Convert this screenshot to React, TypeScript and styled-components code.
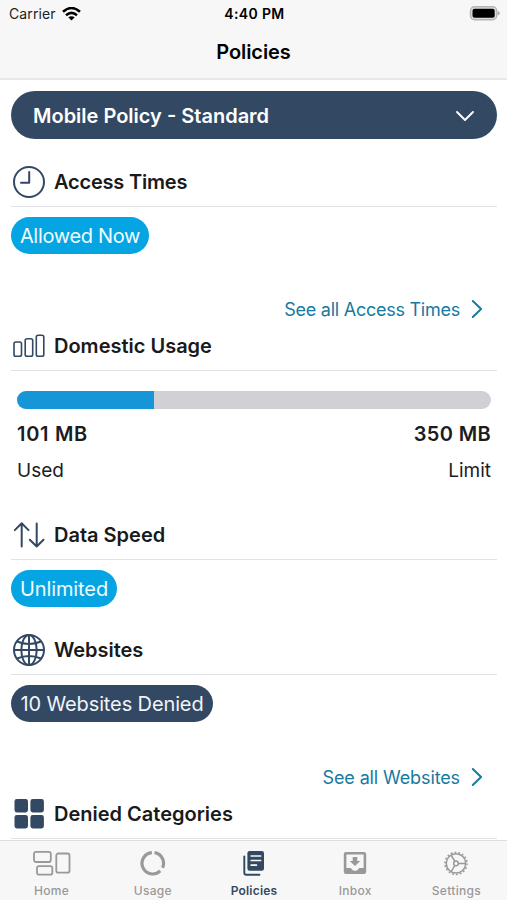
import React from "react";
import styled, { createGlobalStyle } from "styled-components";

const navy = "#334963";
const grey = "#999";

const Global = createGlobalStyle`
  * { box-sizing: border-box; }
  body { margin: 0; background: #fff; }
`;
const Screen = styled.div`
  width: 507px;
  height: 900px;
  display: flex;
  flex-direction: column;
  overflow: hidden;
  font-family: Inter, "Liberation Sans", sans-serif;
  color: #1c1c1e;
  background: #fff;
`;
const Label = styled.span<{ $size: number; $weight?: number; $track?: number }>`
  font-size: ${(p) => p.$size}px;
  font-weight: ${(p) => p.$weight ?? 400};
  letter-spacing: ${(p) => p.$track ?? 0}px;
  line-height: 24px;
  white-space: nowrap;
`;
const Header = styled.header`
  height: 80px;
  flex: none;
  background: #f7f7f7;
  border-bottom: 2px solid #e8e8e8;
  color: #000;
`;
const StatusBar = styled.div`
  height: 28px;
  padding: 0 7px 0 9px;
  display: grid;
  grid-template-columns: 1fr auto 1fr;
  align-items: center;
`;
const Carrier = styled.div`
  display: flex;
  align-items: center;
  gap: 6px;
  color: #222;
`;
const Battery = styled.svg`
  justify-self: end;
  display: block;
`;
const Title = styled.div`
  height: 48px;
  display: flex;
  justify-content: center;
  align-items: center;
`;
const Content = styled.main`
  flex: 1;
  min-height: 0;
  padding: 11px 10px 0 11px;
  overflow: hidden;
`;
const Picker = styled.div`
  height: 48px;
  border-radius: 24px;
  background: ${navy};
  color: #fff;
  padding: 2px 22px 0;
  display: flex;
  align-items: center;
  justify-content: space-between;
`;
const Section = styled.section<{ $height: number; $top?: number }>`
  height: ${(p) => p.$height}px;
  margin-top: ${(p) => p.$top ?? 0}px;
`;
const Heading = styled.div`
  height: 50px;
  border-bottom: 1px solid #e0e3e5;
  padding-left: 2px;
  display: flex;
  align-items: center;
  gap: 9px;
  color: #1a1a1a;
  svg { color: ${navy}; flex: none; }
  span { padding-top: 1px; }
`;
const Chip = styled.div<{ $width: number; $dark?: boolean }>`
  width: ${(p) => p.$width}px;
  height: 37px;
  margin-top: 10px;
  padding-top: 1px;
  border-radius: 19px;
  background: ${(p) => (p.$dark ? navy : "#05a5e3")};
  color: ${(p) => (p.$dark ? "#f0f4f8" : "#f2fbff")};
  display: flex;
  align-items: center;
  justify-content: center;
`;
const More = styled.div`
  height: 24px;
  margin-top: 43px;
  padding-right: 14px;
  display: flex;
  justify-content: flex-end;
  align-items: center;
  gap: 11px;
  color: #177a9f;
  span { padding-top: 1px; }
`;
const Track = styled.div`
  height: 18px;
  margin: 20px 6px 0;
  border-radius: 9px;
  background: #d0d0d5;
  overflow: hidden;
`;
const Fill = styled.div`
  height: 100%;
  background: #1796d7;
`;
const Ends = styled.div<{ $top: number }>`
  margin: ${(p) => p.$top}px 6px 0;
  display: flex;
  justify-content: space-between;
`;
const TabBar = styled.nav`
  height: 60px;
  flex: none;
  background: #f7f7f7;
  border-top: 1px solid #dedede;
  padding-left: 1px;
  display: grid;
  grid-template-columns: repeat(5, 1fr);
`;
const Tab = styled.div<{ $active?: boolean }>`
  display: flex;
  flex-direction: column;
  align-items: center;
  padding-top: 6px;
  color: ${(p) => (p.$active ? navy : grey)};
  svg { height: 32px; }
  span { line-height: 20px; padding-top: 2px; }
`;

const Clock = () => (
  <svg width="32" height="32" viewBox="0 0 32 32" fill="none" stroke="currentColor" strokeWidth="2">
    <circle cx="16" cy="16" r="15" />
    <path d="M16.2 6v10.700H8" strokeLinecap="round" strokeLinejoin="round" />
  </svg>
);
const Bars = () => (
  <svg width="32" height="32" viewBox="0 0 32 32" fill="none" stroke="currentColor" strokeWidth="1.6">
    <rect x="1" y="12" width="7.5" height="14.3" rx="1.8" />
    <rect x="12.2" y="8.7" width="7.5" height="17.6" rx="1.8" />
    <rect x="23.3" y="5.2" width="7.5" height="21.1" rx="1.8" />
  </svg>
);
const Arrows = () => (
  <svg width="32" height="32" viewBox="0 0 32 32" fill="none" stroke="currentColor" strokeWidth="2" strokeLinecap="round" strokeLinejoin="round">
    <path d="M8.7 27.500V4.500M1.8 11.100 8.7 4.300l6.8 6.800M23.7 4.5v23M16.8 20.7l6.9 6.8 6.8-6.8" />
  </svg>
);
const Globe = () => (
  <svg width="32" height="32" viewBox="0 0 32 32" fill="none" stroke="currentColor" strokeWidth="2">
    <circle cx="16" cy="16" r="15" />
    <ellipse cx="16" cy="16" rx="7.7" ry="15" />
    <path d="M16 1v30M1 16h30M4 7.5Q16 12.500 28 7.5M4 24.5Q16 19.500 28 24.5" />
  </svg>
);
const Grid = () => (
  <svg width="32" height="32" viewBox="0 0 32 32" fill="currentColor">
    <rect x="1.5" y="1" width="13.5" height="13.5" rx="2.4" />
    <rect x="17.4" y="1" width="13.5" height="13.5" rx="2.4" />
    <rect x="1.5" y="17" width="13.5" height="13.5" rx="2.4" />
    <rect x="17.4" y="17" width="13.5" height="13.5" rx="2.4" />
  </svg>
);
const Chevron = () => (
  <svg width="12" height="20" viewBox="0 0 12 20" fill="none" stroke="currentColor" strokeWidth="2" strokeLinecap="round" strokeLinejoin="round">
    <path d="m1.800 2 8.300 8-8.300 8" />
  </svg>
);
const HomeIcon = () => (
  <svg width="38" height="32" viewBox="0 0 38 32" fill="none" stroke="currentColor" strokeWidth="1.8">
    <rect x="1" y="4.800" width="16.8" height="10.2" rx="2" />
    <rect x="4" y="19.100" width="15.3" height="8.6" rx="2" />
    <rect x="23.3" y="6.500" width="13.2" height="19.2" rx="2" />
  </svg>
);
const UsageIcon = () => (
  <svg width="26" height="32" viewBox="0 0 26 32" fill="none" stroke="currentColor" strokeWidth="3.200">
    <path d="M14.500 5.600A10.700 10.700 0 0 1 22.500 20.800M20.200 23.900A10.700 10.700 0 1 1 11.900 5.600" />
  </svg>
);
const PoliciesIcon = () => (
  <svg width="24" height="32" viewBox="0 0 24 32">
    <path fill="none" stroke="currentColor" strokeWidth="1.900" strokeLinecap="round" d="M2.300 9.500v16.200q0 2 2 2H17.500" />
    <rect x="5.400" y="4" width="16.600" height="19.800" rx="2.200" fill="currentColor" />
    <path stroke="#f7f7f7" strokeWidth="1.700" d="M8.500 9h10.800M8.500 13.500h10.800M8.500 18.200h6.600" />
  </svg>
);
const InboxIcon = () => (
  <svg width="24" height="32" viewBox="0 0 24 32">
    <path fill="currentColor" fillRule="evenodd" d="M3 5.100h18q2.200 0 2.200 2.200v17.500q0 2.200-2.200 2.200H3q-2.200 0-2.200-2.200V7.300Q.8 5.100 3 5.100ZM3.400 7.500v13.500h4.300q1.700 3 4.300 3t4.300-3h4.300V7.500Z" />
    <path fill="currentColor" d="M9.700 10h4.600v4h3L12 19l-5.300-5h3Z" />
  </svg>
);
const Gear = () => (
  <svg width="26" height="32" viewBox="0 0 26 32" fill="none" stroke="currentColor" strokeWidth="1.500">
    <circle cx="13" cy="16.400" r="9.700" />
    <circle cx="13" cy="16.400" r="11" strokeWidth="1.500" strokeDasharray="1.900 1.940" />
    <circle cx="13" cy="16.400" r="2.300" />
    <path d="M15.300 16.400h7.400M11.900 14.400 8 8M11.900 18.400 8 24.800" />
  </svg>
);

const tabs = [
  { name: "Home", icon: <HomeIcon /> },
  { name: "Usage", icon: <UsageIcon /> },
  { name: "Policies", icon: <PoliciesIcon />, active: true },
  { name: "Inbox", icon: <InboxIcon /> },
  { name: "Settings", icon: <Gear /> },
];

const SectionTitle = ({ icon, children, track = 0 }: { icon: React.ReactNode; children: string; track?: number }) => (
  <Heading>
    {icon}
    <Label $size={20} $weight={600} $track={track}>{children}</Label>
  </Heading>
);

export default function App() {
  const used = 101;
  const limit = 350;
  return (
    <Screen>
      <Global />
      <Header>
        <StatusBar>
          <Carrier>
            <Label $size={14} $track={0.1}>Carrier</Label>
            <svg width="19" height="15" viewBox="0 0 19 15" fill="none" stroke="#000" strokeWidth="2.500">
              <path d="M1 4.800Q9.500-2.800 18 4.800M4 8.200q5.500-4.700 11 0" />
              <path d="M6.300 10.300q3.200-2.300 6.400 0L9.500 13.500Z" fill="#000" stroke="none" />
            </svg>
          </Carrier>
          <Label $size={14} $weight={600} $track={0.35}>4:40 PM</Label>
          <Battery width="31" height="16" viewBox="0 0 31 16">
            <rect x="1.500" y=".8" width="26.200" height="13" rx="4" fill="#ddd" stroke="#b5b5b5" strokeWidth="1.400" />
            <rect x="3.500" y="2.800" width="22.200" height="9" rx="2" />
            <path d="M28.700 5q2 .4 2 2.300t-2 2.300Z" fill="#aaa" />
          </Battery>
        </StatusBar>
        <Title><Label $size={20} $weight={600} $track={-0.1}>Policies</Label></Title>
      </Header>
      <Content>
        <Picker>
          <Label $size={20} $weight={600}>Mobile Policy - Standard</Label>
          <svg width="20" height="12" viewBox="0 0 20 12" fill="none" stroke="currentColor" strokeWidth="1.900" strokeLinecap="round" strokeLinejoin="round">
            <path d="m2 2 8 8 8-8" />
          </svg>
        </Picker>
        <Section $height={164} $top={18}>
          <SectionTitle icon={<Clock />} track={-0.2}>Access Times</SectionTitle>
          <Chip $width={138}><Label $size={20} $track={-0.32}>Allowed Now</Label></Chip>
          <More><Label $size={18} $track={-0.25}>See all Access Times</Label><Chevron /></More>
        </Section>
        <Section $height={189}>
          <SectionTitle icon={<Bars />}>Domestic Usage</SectionTitle>
          <Track><Fill style={{ width: `${(used / limit) * 100}%` }} /></Track>
          <Ends $top={13}>
            <Label $size={20} $weight={600} $track={0.7}>{used} MB</Label>
            <Label $size={20} $weight={600} $track={0.35}>{limit} MB</Label>
          </Ends>
          <Ends $top={13}><Label $size={19}>Used</Label><Label $size={19}>Limit</Label></Ends>
        </Section>
        <Section $height={115}>
          <SectionTitle icon={<Arrows />}>Data Speed</SectionTitle>
          <Chip $width={106}><Label $size={20} $track={-0.1}>Unlimited</Label></Chip>
        </Section>
        <Section $height={164}>
          <SectionTitle icon={<Globe />} track={-0.05}>Websites</SectionTitle>
          <Chip $width={202} $dark><Label $size={20} $track={-0.12}>10 Websites Denied</Label></Chip>
          <More><Label $size={18} $track={-0.12}>See all Websites</Label><Chevron /></More>
        </Section>
        <SectionTitle icon={<Grid />}>Denied Categories</SectionTitle>
      </Content>
      <TabBar>
        {tabs.map((t) => (
          <Tab key={t.name} $active={t.active}>
            {t.icon}
            <Label $size={12} $weight={t.active ? 600 : 500} $track={t.active ? 0.2 : 0.3}>{t.name}</Label>
          </Tab>
        ))}
      </TabBar>
    </Screen>
  );
}
